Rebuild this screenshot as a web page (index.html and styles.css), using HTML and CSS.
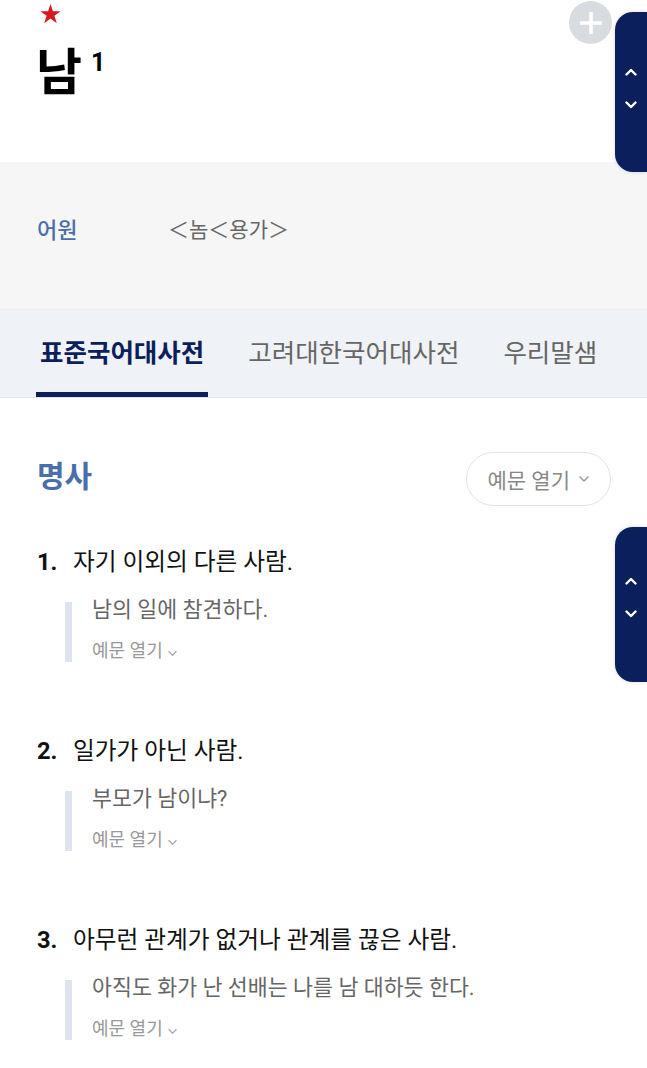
FILE: index.html
```html
<!DOCTYPE html>
<html lang="ko">
<head>
    <meta charset="utf-8">
    <title>남 - 사전</title>
    <link rel="stylesheet" href="styles.css">
</head>
<body>
    <header class="entry">
        <svg class="star" width="21" height="20" viewBox="0 0 24 23">
            <polygon points="12,0 14.8,8.4 23.6,8.4 16.5,13.6 19.2,22 12,16.8 4.8,22 7.5,13.6 0.4,8.4 9.2,8.4" fill="#d7181e"/>
        </svg>
        <h1 class="headword">남<sup>1</sup></h1>
        <button class="add-btn" aria-label="추가">
            <svg width="22" height="22" viewBox="0 0 22 22">
                <path d="M11 1v20M1 11h20" stroke="#fff" stroke-width="3.6" stroke-linecap="round"/>
            </svg>
        </button>
    </header>

    <section class="origin">
        <span class="origin-label">어원</span>
        <span class="origin-text">＜놈＜용가＞</span>
    </section>

    <nav class="tabs">
        <a class="tab active">표준국어대사전</a>
        <a class="tab">고려대한국어대사전</a>
        <a class="tab">우리말샘</a>
    </nav>

    <main class="content">
        <div class="pos-row">
            <h2 class="pos">명사</h2>
            <button class="open-btn">예문 열기
                <svg width="12" height="8" viewBox="0 0 12 8"><polyline points="1.5,1.5 6,6 10.5,1.5" fill="none" stroke="#999" stroke-width="1.5"/></svg>
            </button>
        </div>

        <ol class="senses">
            <li class="sense">
                <p class="def"><b class="num">1.</b>자기 이외의 다른 사람.</p>
                <div class="example">
                    <p class="example-text">남의 일에 참견하다.</p>
                    <p class="example-more">예문 열기
                        <svg width="11" height="7" viewBox="0 0 12 8"><polyline points="1.5,1.5 6,6 10.5,1.5" fill="none" stroke="#aaa" stroke-width="1.5"/></svg>
                    </p>
                </div>
            </li>
            <li class="sense">
                <p class="def"><b class="num">2.</b>일가가 아닌 사람.</p>
                <div class="example">
                    <p class="example-text">부모가 남이냐?</p>
                    <p class="example-more">예문 열기
                        <svg width="11" height="7" viewBox="0 0 12 8"><polyline points="1.5,1.5 6,6 10.5,1.5" fill="none" stroke="#aaa" stroke-width="1.5"/></svg>
                    </p>
                </div>
            </li>
            <li class="sense">
                <p class="def"><b class="num">3.</b>아무런 관계가 없거나 관계를 끊은 사람.</p>
                <div class="example">
                    <p class="example-text">아직도 화가 난 선배는 나를 남 대하듯 한다.</p>
                    <p class="example-more">예문 열기
                        <svg width="11" height="7" viewBox="0 0 12 8"><polyline points="1.5,1.5 6,6 10.5,1.5" fill="none" stroke="#aaa" stroke-width="1.5"/></svg>
                    </p>
                </div>
            </li>
        </ol>
    </main>

    <!-- floating up/down scrollers on the right edge -->
    <div class="scroller scroller-top">
        <svg width="12" height="8" viewBox="0 0 12 8"><polyline points="1.5,6.5 6,2 10.5,6.5" fill="none" stroke="#fff" stroke-width="2.4" stroke-linecap="round" stroke-linejoin="round"/></svg>
        <svg width="12" height="8" viewBox="0 0 12 8"><polyline points="1.5,1.5 6,6 10.5,1.5" fill="none" stroke="#fff" stroke-width="2.4" stroke-linecap="round" stroke-linejoin="round"/></svg>
    </div>
    <div class="scroller scroller-mid">
        <svg width="12" height="8" viewBox="0 0 12 8"><polyline points="1.5,6.5 6,2 10.5,6.5" fill="none" stroke="#fff" stroke-width="2.4" stroke-linecap="round" stroke-linejoin="round"/></svg>
        <svg width="12" height="8" viewBox="0 0 12 8"><polyline points="1.5,1.5 6,6 10.5,1.5" fill="none" stroke="#fff" stroke-width="2.4" stroke-linecap="round" stroke-linejoin="round"/></svg>
    </div>
</body>
</html>
```

FILE: styles.css
```css
body {
    font-family: Roboto, "Noto Sans CJK KR", sans-serif;
    margin: 0;
    padding: 0;
    background-color: #fff;
    color: #111;
    position: relative;
    overflow: hidden;
}
p, h1, h2, ol {
    margin: 0;
    padding: 0;
}

/* headword */
.entry {
    height: 162px;
    padding: 4px 0 0 40px;
    box-sizing: border-box;
}
.star {
    display: block;
}
.headword {
    margin: 19px 0 0 -4px;
    font-size: 50px;
    line-height: 60px;
    font-weight: 700;
    color: #000;
}
.headword sup {
    font-size: 25px;
    font-family: Roboto, sans-serif;
    margin-left: 9px;
    vertical-align: 19px;
    line-height: 0;
}
.add-btn {
    position: absolute;
    left: 569px;
    top: 1px;
    width: 43px;
    height: 43px;
    border: 0;
    border-radius: 50%;
    background-color: #d8dbdf;
    display: flex;
    align-items: center;
    justify-content: center;
    padding: 0;
}

/* etymology */
.origin {
    display: flex;
    align-items: center;
    height: 148px;
    padding: 0 37px 16px;
    box-sizing: border-box;
    background-color: #f6f6f7;
    border-bottom: 1px solid #ebecee;
}
.origin-label {
    width: 131px;
    font-size: 22px;
    font-weight: 500;
    color: #4a6fa8;
}
.origin-text {
    font-size: 21px;
    color: #666;
}

/* dictionary tabs */
.tabs {
    display: flex;
    gap: 36px;
    padding: 0 0 0 36px;
    background-color: #eff2f6;
    border-bottom: 1px solid #e2e6ec;
}
.tab {
    padding: 26px 4px 22px;
    font-size: 25.5px;
    line-height: 34px;
    color: #666;
    border-bottom: 5px solid transparent;
}
.tab.active {
    color: #0b1f5c;
    font-weight: 700;
    border-bottom-color: #0b1f5c;
}

/* senses */
.content {
    padding: 54px 36px 0 37px;
}
.pos-row {
    display: flex;
    justify-content: space-between;
    align-items: center;
}
.pos {
    font-size: 30px;
    font-weight: 700;
    color: #4a6fa8;
    margin-bottom: 10px;
}
.open-btn {
    height: 54px;
    padding: 0 20px 0 21px;
    border: 1.5px solid #e4e4e4;
    border-radius: 27px;
    background-color: #fff;
    font-family: inherit;
    font-size: 21px;
    color: #888;
    display: flex;
    align-items: center;
    gap: 8px;
}
.senses {
    list-style: none;
}
.sense {
    margin-top: 73px;
}
.sense:first-child {
    margin-top: 40px;
}
.def {
    display: flex;
    font-size: 23.7px;
    line-height: 32px;
}
.num {
    width: 36px;
    font-weight: 700;
}
.example {
    margin: 24px 0 0 28px;
    padding-left: 20px;
    border-left: 7px solid #dde4ee;
}
.example-text {
    font-size: 21.7px;
    line-height: 16px;
    color: #666;
}
.example-more {
    margin-top: 22px;
    font-size: 18px;
    line-height: 22px;
    color: #999;
}

/* right edge scrollers */
.scroller {
    position: absolute;
    right: 0;
    width: 32px;
    background-color: #0b1f5c;
    border-radius: 18px 0 0 18px;
    box-shadow: 0 0 4px rgba(0, 0, 0, 0.15);
    display: flex;
    flex-direction: column;
    align-items: center;
    justify-content: center;
    gap: 25px;
    padding-bottom: 8px;
    box-sizing: border-box;
}
.scroller-top {
    top: 12px;
    height: 160px;
}
.scroller-mid {
    top: 527px;
    height: 155px;
    padding-bottom: 14px;
}
```
